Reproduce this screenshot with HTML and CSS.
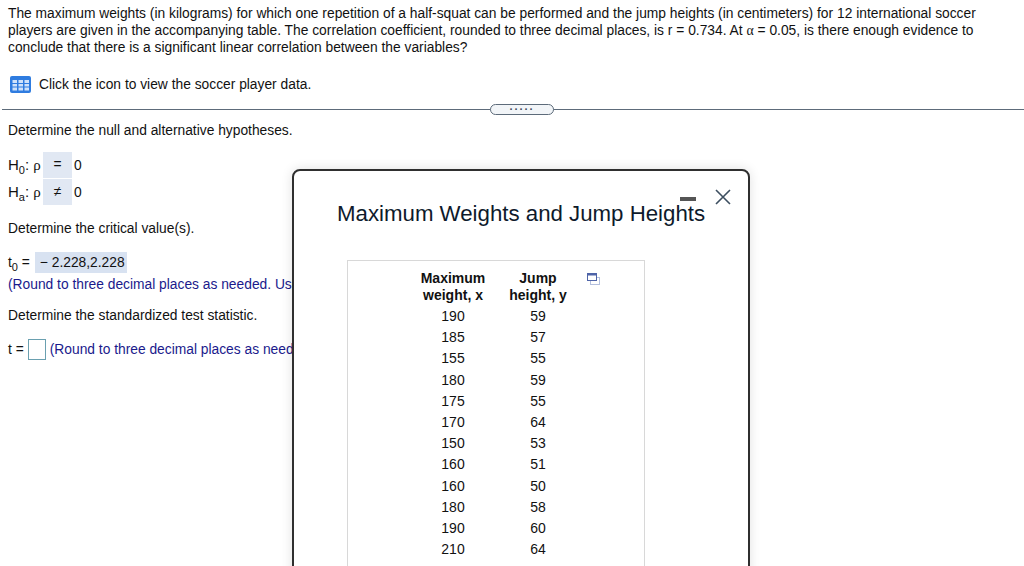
FILE: index.html
```html
<!DOCTYPE html>
<html lang="en">
<head>
    <meta charset="UTF-8">
    <meta name="viewport" content="width=device-width, initial-scale=1.0">
    <title>Maximum Weights and Jump Heights</title>
    <link rel="stylesheet" href="styles.css">
</head>
<body>

<div class="question">
    <p class="intro">The maximum weights (in kilograms) for which one repetition of a half-squat can be performed and the jump heights (in centimeters) for 12 international soccer players are given in the accompanying table. The correlation coefficient, rounded to three decimal places, is r = 0.734. At <span class="greek">α</span> = 0.05, is there enough evidence to conclude that there is a significant linear correlation between the variables?</p>
    <div class="data-link">
        <svg class="grid-icon" width="21" height="17" viewBox="0 0 21 17">
            <rect x="0" y="0" width="21" height="17" rx="2" fill="#2f7ce0"/>
            <g fill="#cfe2fa">
                <rect x="2.5" y="4" width="4.5" height="3"/><rect x="8.5" y="4" width="4.5" height="3"/><rect x="14.5" y="4" width="4.5" height="3"/>
                <rect x="2.5" y="8" width="4.5" height="2.5"/><rect x="8.5" y="8" width="4.5" height="2.5"/><rect x="14.5" y="8" width="4.5" height="2.5"/>
                <rect x="2.5" y="11.5" width="4.5" height="3"/><rect x="8.5" y="11.5" width="4.5" height="3"/><rect x="14.5" y="11.5" width="4.5" height="3"/>
            </g>
        </svg>
        <span>Click the icon to view the soccer player data.</span>
    </div>
</div>

<div class="divider">
    <div class="divider-handle">.....</div>
</div>

<div class="answers">
    <p class="step">Determine the null and alternative hypotheses.</p>
    <div class="hypotheses">
        <div class="hyp-row">
            <span class="hyp-label">H<sub>0</sub>: <span class="rho">ρ</span></span>
            <span class="hyp-answer">=</span>
            <span>0</span>
        </div>
        <div class="hyp-row">
            <span class="hyp-label">H<sub>a</sub>: <span class="rho">ρ</span></span>
            <span class="hyp-answer">≠</span>
            <span>0</span>
        </div>
    </div>
    <p class="step step-critical">Determine the critical value(s).</p>
    <div class="critical">
        <span>t<sub>0</sub> =</span>
        <span class="critical-answer">− 2.228,2.228</span>
    </div>
    <p class="hint">(Round to three decimal places as needed. Use a comma to separate answers as needed.)</p>
    <p class="step step-statistic">Determine the standardized test statistic.</p>
    <div class="statistic">
        <span>t =</span>
        <span class="answer-box"></span>
        <span class="hint">(Round to three decimal places as needed.)</span>
    </div>
</div>

<div class="modal">
    <div class="modal-minimize"></div>
    <svg class="modal-close" width="16" height="16" viewBox="0 0 16 16">
        <path d="M1 1 L15 15 M15 1 L1 15" stroke="#3d4f60" stroke-width="1.6" fill="none"/>
    </svg>
    <h2 class="modal-title">Maximum Weights and Jump Heights</h2>
    <div class="data-card">
        <svg class="copy-icon" width="13" height="12" viewBox="0 0 13 12">
            <rect x="3.5" y="4.5" width="9" height="7" fill="#fff" stroke="#b4c0de"/>
            <rect x="0.5" y="0.5" width="9" height="7" fill="#fff" stroke="#4f64a8"/>
            <rect x="0.5" y="0.5" width="9" height="2" fill="#4f64a8"/>
        </svg>
        <table class="data-table">
            <thead>
                <tr><th>Maximum<br>weight, x</th><th>Jump<br>height, y</th></tr>
            </thead>
            <tbody>
                <tr><td>190</td><td>59</td></tr>
                <tr><td>185</td><td>57</td></tr>
                <tr><td>155</td><td>55</td></tr>
                <tr><td>180</td><td>59</td></tr>
                <tr><td>175</td><td>55</td></tr>
                <tr><td>170</td><td>64</td></tr>
                <tr><td>150</td><td>53</td></tr>
                <tr><td>160</td><td>51</td></tr>
                <tr><td>160</td><td>50</td></tr>
                <tr><td>180</td><td>58</td></tr>
                <tr><td>190</td><td>60</td></tr>
                <tr><td>210</td><td>64</td></tr>
            </tbody>
        </table>
    </div>
</div>

</body>
</html>
```

FILE: styles.css
```css
html, body {
    height: 566px;
    overflow: hidden;
}
body {
    font-family: "Liberation Sans", Arial, sans-serif;
    font-size: 13.8px;
    line-height: 17px;
    color: #111;
    margin: 0;
    background-color: white;
    position: relative;
}
p {
    margin: 0;
}
sub {
    font-size: 11px;
    line-height: 0;
}
.question {
    padding: 5px 40px 0 8px;
}
.greek {
    font-family: "Liberation Serif", serif;
}
.data-link {
    display: flex;
    align-items: center;
    gap: 8px;
    margin-top: 20px;
    margin-left: 2px;
}
.divider {
    display: flex;
    align-items: center;
    justify-content: center;
    height: 12px;
    margin-top: 10px;
    margin-left: 2px;
    padding-left: 18px;
    background: linear-gradient(#5d6b7a, #5d6b7a) center / 100% 1px no-repeat;
}
.divider-handle {
    width: 62px;
    height: 9px;
    border: 1px solid #5d6b7a;
    border-radius: 6px;
    background-color: #f2f5f8;
    color: #3f4c5a;
    font-size: 11px;
    font-weight: bold;
    line-height: 3px;
    letter-spacing: 1.9px;
    text-align: center;
}
.answers {
    padding: 7px 0 0 8px;
}
.hypotheses {
    margin-top: 13px;
}
.hyp-row {
    display: flex;
    align-items: center;
    height: 26px;
    margin-bottom: 1px;
}
.hyp-label {
    width: 35px;
    font-size: 15px;
}
.rho {
    font-family: "Liberation Serif", serif;
}
.hyp-answer {
    width: 29px;
    height: 26px;
    margin-right: 2px;
    line-height: 26px;
    text-align: center;
    background-color: #e1e8f3;
}
.step-critical {
    margin-top: 15px;
}
.critical {
    display: flex;
    align-items: flex-start;
    gap: 5px;
    margin-top: 15px;
    height: 24px;
}
.critical > span:first-child {
    padding-top: 2px;
}
.critical-answer {
    padding: 2px 2px 2px 5px;
    background-color: #d8e2f1;
}
.hint {
    color: #1a1a8c;
    white-space: nowrap;
}
.step-statistic {
    margin-top: 14px;
}
.statistic {
    display: flex;
    align-items: center;
    gap: 4px;
    margin-top: 15px;
}
.answer-box {
    width: 16px;
    height: 19px;
    border: 1px solid #6aa0b0;
    background-color: white;
}
.modal {
    position: absolute;
    left: 292px;
    top: 169px;
    width: 454px;
    height: 500px;
    background-color: white;
    border: 2px solid #2f2f2f;
    border-radius: 8px;
    box-shadow: 0 0 12px rgba(0, 0, 0, 0.12);
}
.modal-minimize {
    position: absolute;
    left: 386px;
    top: 26px;
    width: 16px;
    height: 4px;
    background-color: #555;
}
.modal-close {
    position: absolute;
    left: 421px;
    top: 18px;
}
.modal-title {
    margin: 30px 0 0 43px;
    font-size: 22.25px;
    font-weight: normal;
    line-height: 26px;
    color: #0e1a2b;
    white-space: nowrap;
}
.data-card {
    position: relative;
    margin: 33px 0 0 53px;
    width: 296px;
    height: 400px;
    border: 1px solid #d8d8d8;
}
.copy-icon {
    position: absolute;
    left: 239px;
    top: 12px;
}
.data-table {
    border-collapse: collapse;
    margin: 9px 0 0 62.5px;
}
.data-table th {
    width: 85px;
    padding: 0 0 2px;
    font-size: 14px;
    line-height: 17px;
    text-align: center;
}
.data-table td {
    padding: 0;
    height: 21.2px;
    font-size: 14px;
    text-align: center;
}
```
